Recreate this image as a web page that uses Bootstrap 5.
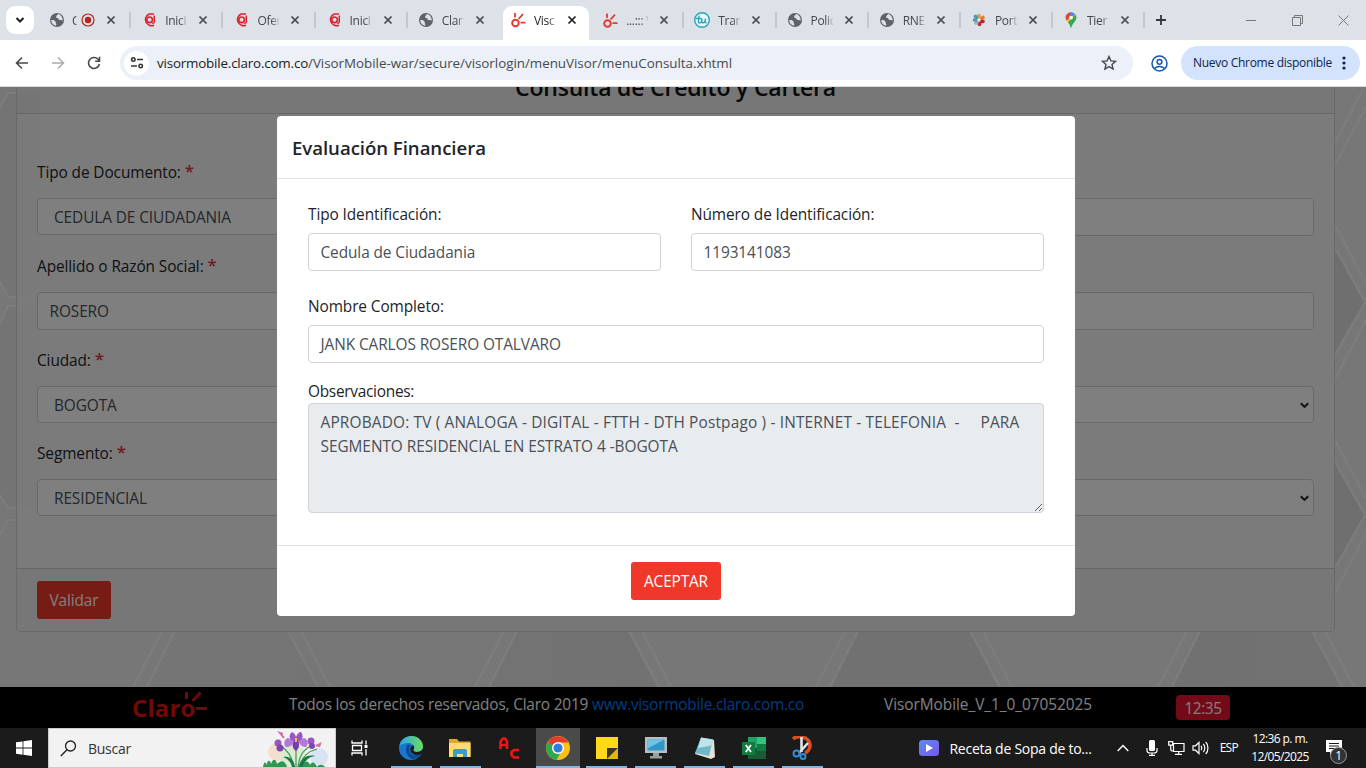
<!DOCTYPE html>
<html lang="es">
<head>
<meta charset="utf-8">
<meta name="viewport" content="width=device-width, initial-scale=1">
<title>Visor Mobile</title>
<link rel="stylesheet" href="https://cdn.jsdelivr.net/npm/bootstrap@5.3.0/dist/css/bootstrap.min.css">
<style>
body{font-family:"Open Sans","Noto Sans",sans-serif;font-size:15.4px;line-height:24px;letter-spacing:-.09px;height:768px;overflow:hidden;color:#212529}
svg{display:block;flex:none}
.caps{letter-spacing:.06px}
.caps-doc{letter-spacing:.18px}
.caps-wide{letter-spacing:.17px}
.tight{letter-spacing:-.27px}
.tighter{letter-spacing:-.5px}
/* browser chrome */
.tabstrip{height:40px;background:#dde1e8;font-size:12px;letter-spacing:-.3px;color:#45484d}
.tab-search{width:28px;height:28px;margin:6px 5px 0 6px;background:#fff;border-radius:9px}
.btab{width:92.2px;height:40px;padding-left:10px;position:relative}
.btab .ttl{width:22px;margin-left:8px;padding-top:1px;overflow:hidden;white-space:nowrap;-webkit-mask:linear-gradient(90deg,#000 65%,rgba(0,0,0,.15));mask:linear-gradient(90deg,#000 65%,rgba(0,0,0,.15))}
.btab .ttl.stub{width:5px;margin-left:7px}
.btab .cls{margin-left:11px}
.btab.sep::after{content:"";position:absolute;right:0;top:12px;width:2px;height:16px;background:#c3c7ce}
.btab.on::before{content:"";position:absolute;left:3px;right:3px;top:6px;bottom:0;background:#fff;border-radius:9px 9px 0 0}
.btab.on>*{position:relative;z-index:1;color:#1f1f1f}
.newtab{margin:14px 0 0 10px}
.win-controls{gap:35px;padding-right:17px}
.toolbar{height:47px;background:#fff;border-bottom:1px solid #d9dbde;padding-left:15px}
.toolbar-nav{gap:22px}
.omni{height:34px;width:1013px;border-radius:17px;background:#ebf0f9;padding:0 16px 0 4px;margin:0 18px 0 19px}
.site-chip{width:25px;height:25px;background:#fff}
.url{font-size:13.4px;margin-left:8px;letter-spacing:-.03px;color:#474b50}
.url b{font-weight:400;color:#1f2023;letter-spacing:-.19px}
.update-pill{width:179px;height:34px;border-radius:17px;background:#d3e3fd;font-size:12px;letter-spacing:-.29px;color:#0b2350;padding:0 14px 0 12px;margin-left:13px}
/* page */
.consult{margin:-28px 31px 0 16px;width:1319px;height:573px;background:rgba(255,255,255,.5);border:1px solid #d2d2d2;border-radius:4px}
.consult .card-header{height:54px;background:rgba(0,0,0,.035);border-bottom:1px solid #cfcfcf;font-size:23px;letter-spacing:-.2px;font-weight:600;line-height:30px;padding:12px 12px 0;color:#111}
.consult .card-body{padding:47px 20px 0}
.consult .card-footer{height:63px;padding:12px 20px;background:rgba(0,0,0,.035);border-top:1px solid #cfcfcf}
.req{color:#dc3545;font-weight:600;font-size:17px;line-height:1;vertical-align:1px}
.form-control{font-size:15.4px;line-height:24px;letter-spacing:-.09px;color:#495057;border:1px solid #ced4da;border-radius:4px;padding:7px 12px 3px 11.5px;height:38px}
.consult label{display:block;height:24px;margin-bottom:13px}
.consult .grp{margin-bottom:19px}
.consult .form-control.pick{height:37px;padding:7px 4px 3px 16px}
.btn-claro{background:#ef3829;color:#fff;border:0;border-radius:3px;height:38px;padding:2px 13px 0;font-size:15.4px;letter-spacing:-.14px}
.btn-claro.small-pad{padding:2px 12.500px 0}
.page-foot{height:41px;background:#000;color:#fff;padding-top:6px}
.rights{letter-spacing:-.19px}
.page-foot a{color:#007bff;text-decoration:none;letter-spacing:-.24px}
.brand{width:157px;margin-left:132px;padding-top:3px}
.logo-word{font-size:24px;font-weight:700;color:#e0140c;letter-spacing:.1px}
.brand svg{margin:-6px 0 0 -13px}
.version{margin-right:84px;letter-spacing:-.04px}
.clock-badge{background:#e8152f;width:54px;height:25px;border-radius:4px;margin:2px 136px 0 0;padding-top:2px;letter-spacing:-.45px}
.shade{background:rgba(0,0,0,.5)}
.eval{width:798px;height:500px;left:277px;top:29px;border-radius:4px}
.eval .modal-header{height:63px;padding:1px 15px 0;border-bottom:1px solid #dee2e6;font-size:18.6px;font-weight:600;letter-spacing:-.04px}
.eval .modal-body{padding:24px 31px 0}
.eval .modal-footer{height:71px;border-top:1px solid #dee2e6}
.eval .row{--bs-gutter-x:30px}
.eval label{display:block;margin-bottom:6px}
.eval .gap-row{margin-bottom:24px}
.eval label.notes{margin:17px 0 -1px}
.eval .readonly-box{height:110px;background:#e9ecef;white-space:pre;resize:vertical;overflow:hidden;letter-spacing:-.04px}
/* taskbar */
.taskbar{height:40px;background:#1b1b1b;color:#fff;font-size:14px;letter-spacing:-.26px}
.search-box{width:288px;height:40px;background:#f2f2f2;color:#333;border:1px solid #ccc;padding-left:11px}
.search-box .hint{margin-left:11px;padding-top:1px}
.slot{width:48.9px;height:40px;display:flex;align-items:center;justify-content:center;position:relative}
.slot.run::after{content:"";position:absolute;left:4px;right:4px;bottom:0;height:2px;background:#76b9ed}
.slot.cur{background:#4a4a4a;width:44.9px;margin:0 2px}
.slot.cur::after{left:0;right:0}
.start-btn{width:48px}
.apps{margin-left:2px}
.tray{margin-left:auto;padding-right:4px}
.news{margin:0 25px 0 10px;padding-top:1px;white-space:nowrap}
.t-mic{margin-left:17px}
.t-net{margin-left:10px}
.t-vol{margin-left:7px}
.esp{font-size:12px;letter-spacing:-.7px;margin:0 7px 0 11px}
.when{font-size:12px;line-height:18px;letter-spacing:-.6px;width:70px;text-align:center}
.note{margin:0 20px 0 11px}
.note-badge{position:absolute;left:4px;top:7px;width:17px;height:17px;border:1px solid #999;border-radius:50%;background:#333;font-size:12px;line-height:15px;text-align:center}
</style>
</head>
<body class="d-flex flex-column">
<svg width="0" height="0" class="position-absolute">
<defs>
<symbol id="globe" viewBox="0 0 16 16"><circle cx="8" cy="8" r="7" fill="#5f6368"/><path d="M2.200 8.200c2-.4 3.400.2 4.200 1.300.6.9 0 1.500.7 2.200.4.500.2 1.200-.1 2.100-2.700-.6-4.700-2.800-4.800-5.600zM9 2c-.2 1.200-1.200 1.100-1.700 1.900-.4.800.3 1.200-.4 1.900 1.300.1 2.200.3 2.600 1.300.3.900 1.300 1.200 2.300 1 .9-.1 1.300.6 1.900.3C13.900 5.300 11.800 2.700 9 2z" fill="#dde1e8"/></symbol>
<symbol id="cx" viewBox="0 0 10 10"><path d="M1.500 1.500l7 7M8.500 1.500l-7 7" stroke="currentColor" stroke-width="1.700" fill="none"/></symbol>
<symbol id="cc" viewBox="0 0 14 14"><path d="M12 12.200A6 6 0 1 1 7.200 1H12M12.300 2.500V8.500c0 1.500-1 2-2 1.500" fill="none" stroke="#d8232f" stroke-width="1.500"/><circle cx="7.600" cy="6.800" r="2.800" fill="none" stroke="#d8232f" stroke-width="1.600"/></symbol>
<symbol id="spark" viewBox="0 0 16 16"><circle cx="5.500" cy="11" r="3.300" fill="none" stroke="#e03c31" stroke-width="2"/><path d="M5 1v4.500M8.500 7l4.500-4.800M10.500 10.600H15.500" stroke="#e03c31" stroke-width="1.800"/></symbol>
<symbol id="chev" viewBox="0 0 9 7"><path d="M.8 1.200l3.700 3.700L8.200 1.200" fill="none" stroke="#222" stroke-width="2"/></symbol>
</defs>
</svg>

<header class="tabstrip d-flex">
<div class="tab-search d-flex align-items-center justify-content-center"><svg width="10" height="8"><path d="M1.500 2l3.500 3.500L8.500 2" fill="none" stroke="#1f1f1f" stroke-width="2"/></svg></div>
<div class="btab sep d-flex align-items-center"><svg width="16" height="16"><use href="#globe"/></svg><span class="ttl stub">C</span><svg class="ms-1" width="14" height="14"><circle cx="7" cy="7" r="6" fill="none" stroke="#b3261e" stroke-width="1.200"/><circle cx="7" cy="7" r="3.200" fill="#b3261e"/></svg><svg class="cls" width="10" height="10"><use href="#cx"/></svg></div>
<div class="btab sep d-flex align-items-center"><svg width="16" height="14"><use href="#cc"/></svg><span class="ttl">Inici</span><svg class="cls" width="10" height="10"><use href="#cx"/></svg></div>
<div class="btab sep d-flex align-items-center"><svg width="16" height="14"><use href="#cc"/></svg><span class="ttl">Ofer</span><svg class="cls" width="10" height="10"><use href="#cx"/></svg></div>
<div class="btab sep d-flex align-items-center"><svg width="16" height="14"><use href="#cc"/></svg><span class="ttl">Inici</span><svg class="cls" width="10" height="10"><use href="#cx"/></svg></div>
<div class="btab d-flex align-items-center"><svg width="16" height="16"><use href="#globe"/></svg><span class="ttl">Clar</span><svg class="cls" width="10" height="10"><use href="#cx"/></svg></div>
<div class="btab on d-flex align-items-center"><svg width="16" height="16"><use href="#spark"/></svg><span class="ttl">Visc</span><svg class="cls" width="10" height="10"><use href="#cx"/></svg></div>
<div class="btab sep d-flex align-items-center"><svg width="16" height="17"><use href="#spark"/></svg><span class="ttl">...::: V</span><svg class="cls" width="10" height="10"><use href="#cx"/></svg></div>
<div class="btab sep d-flex align-items-center"><svg width="16" height="16"><circle cx="8" cy="8" r="7.300" fill="#e9f6f9" stroke="#28a5bd" stroke-width="1.400"/><path d="M2 6.500h5.500M5.200 3.500c-.5 3-1.500 7.500.3 7.500 1.500 0 2.500-3 2.700-4.300-.6 2.500-.6 4.300.7 4.300 1.500 0 2.300-2.500 2.600-4.300-.5 2.500-.7 4.500 1.300 4" fill="none" stroke="#28a5bd" stroke-width="1.300"/></svg><span class="ttl">Tran</span><svg class="cls" width="10" height="10"><use href="#cx"/></svg></div>
<div class="btab sep d-flex align-items-center"><svg width="16" height="16"><use href="#globe"/></svg><span class="ttl">Polic</span><svg class="cls" width="10" height="10"><use href="#cx"/></svg></div>
<div class="btab sep d-flex align-items-center"><svg width="16" height="16"><use href="#globe"/></svg><span class="ttl">RNE</span><svg class="cls" width="10" height="10"><use href="#cx"/></svg></div>
<div class="btab sep d-flex align-items-center"><svg width="16" height="16"><g stroke-width="3.600" stroke-linecap="round"><path d="M8 7V3.500" stroke="#e9a13a"/><path d="M10 7l2-1.500" stroke="#e8793a"/><path d="M10 9.500h2" stroke="#b22a2a"/><path d="M8.500 10.500v2" stroke="#c22b2b"/><path d="M6 10l-1 1" stroke="#9bb0c2"/><path d="M5.500 8H3.500" stroke="#5c93ad"/><path d="M5.500 5.500l-1-1" stroke="#3b9db8"/></g><circle cx="8" cy="8" r="1.700" fill="#f3ede8"/></svg><span class="ttl">Port</span><svg class="cls" width="10" height="10"><use href="#cx"/></svg></div>
<div class="btab sep d-flex align-items-center"><svg width="16" height="16"><path d="M8 .3a5.500 5.500 0 0 0-4.300 2L8 6z" fill="#ea4335"/><path d="M8 .3a5.500 5.500 0 0 1 4.300 2L6 9 3.500 7.500z" fill="#4285f4"/><path d="M3.700 2.300C2 4.300 2.300 6.700 3.500 8.500L8 4z" fill="#ea4335"/><path d="M3.500 8.500L6 10.500 13 4l-.8-1.800z" fill="#fbbc04"/><path d="M12.500 2.500C14.200 5 13.300 7.600 11.800 9.500 10 11.800 9 13 8.500 15.300c-.2.700-.8.700-1 0-.5-2-1.200-3.500-2.500-5z" fill="#34a853"/><circle cx="8" cy="5.600" r="1.900" fill="#fff"/></svg><span class="ttl">Tier</span><svg class="cls" width="10" height="10"><use href="#cx"/></svg></div>
<svg class="newtab" width="12" height="12"><path d="M6 1v10M1 6h10" stroke="#33363a" stroke-width="1.800"/></svg>
<div class="win-controls ms-auto d-flex align-items-center">
<svg width="11" height="11"><path d="M0 5.500h10" stroke="#777"/></svg>
<svg width="11" height="11"><path d="M.5 2.500h8v8h-8zM2.500 2.500v-2h8v8h-2" fill="none" stroke="#777"/></svg>
<svg width="11" height="11"><path d="M.5.5l10 10M10.500.5l-10 10" stroke="#777"/></svg>
</div>
</header>

<div class="toolbar d-flex align-items-center">
<div class="toolbar-nav d-flex">
<svg width="14" height="14"><path d="M13 7H2M7 1.500L1.500 7 7 12.500" fill="none" stroke="#45484d" stroke-width="1.600"/></svg>
<svg width="14" height="14"><path d="M1 7h11M7 1.500L12.500 7 7 12.500" fill="none" stroke="#a9abaf" stroke-width="1.500"/></svg>
<svg width="14" height="14"><path d="M12.400 8A5.500 5.500 0 1 1 11 3.200l1.300 1.300M12.500.8v4.400H8.200" fill="none" stroke="#45484d" stroke-width="1.600"/></svg>
</div>
<div class="omni d-flex align-items-center">
<div class="site-chip rounded-circle d-flex align-items-center justify-content-center"><svg width="14" height="14"><g fill="none" stroke="#33363a" stroke-width="1.600"><circle cx="3.300" cy="3.500" r="1.700"/><path d="M7 3.500h6M1 10h6"/><circle cx="10.700" cy="10" r="1.700"/></g></svg></div>
<span class="url"><b>visormobile.claro.com.co</b><span>/VisorMobile-war/secure/visorlogin/menuVisor/menuConsulta.xhtml</span></span>
<svg class="ms-auto" width="16" height="16"><path d="M8 1.500l1.900 4.400 4.700.4-3.600 3.100 1.100 4.600L8 11.600 3.900 14 5 9.400 1.400 6.300l4.700-.4z" fill="none" stroke="#45484d" stroke-width="1.400"/></svg>
</div>
<svg width="17" height="17"><g fill="none" stroke="#1a56b0" stroke-width="1.500"><circle cx="8.500" cy="8.500" r="7.500"/><circle cx="8.500" cy="6.800" r="2.400"/><path d="M3.500 13.500c2.500-2.700 7.500-2.700 10 0"/></g></svg>
<div class="update-pill d-flex align-items-center justify-content-between"><span>Nuevo Chrome disponible</span><svg width="4" height="16" fill="#0b2350"><circle cx="2" cy="3" r="1.600"/><circle cx="2" cy="8" r="1.600"/><circle cx="2" cy="13" r="1.600"/></svg></div>
</div>

<main class="flex-grow-1 position-relative overflow-hidden d-flex flex-column">
<svg class="position-absolute top-0 start-0" width="1366" height="641" viewBox="0 87 1366 641">
<defs><linearGradient id="dk" x2="1"><stop offset="0" stop-color="#ebebeb"/><stop offset=".6" stop-color="#e2e2e2"/><stop offset="1" stop-color="#e4e4e4"/></linearGradient></defs>
<rect y="87" width="1366" height="641" fill="#eee"/>
<path d="M175 631L147 687H318L288 631zM516 631L489 687H657L628 631zM857 631L830 687H998L970 631zM1200 631L1172 687H1341L1313 631z" fill="url(#dk)"/>
<path d="M0 108L8 93H40V297H8L0 282zM0 323L8 306H40V508H8L0 495z" fill="#e9e9e9"/>
<path d="M1335 248L1365 302 1335 355zM1335 462L1365 515 1335 568z" fill="#dedede"/>
<g fill="none" stroke="#fbfbfb" stroke-width="2"><path d="M162 631l-29 56M175 631l-28 56M288 631l30 56M301 631l29 56M504 631l-29 56M517 631l-28 56M629 631l30 56M642 631l29 56M845 631l-29 56M858 631l-28 56M970 631l30 56M983 631l29 56M1187 631l-29 56M1200 631l-28 56M1312 631l30 56M1325 631l29 56"/>
<path d="M0 108L8 93H16M0 282L8 297H16M0 323L8 306H16M0 495L8 508H16M0 535L8 520H16M1335 143l29-56M1335 165l31-58M1335 225l31 58M1335 248l30 54-30 53M1366 320l-31 59M1335 440l31 58M1335 462l30 53-30 53M1366 533l-31 60"/></g>
</svg>
<section class="card consult position-relative">
<div class="card-header text-center">Consulta de Crédito y Cartera</div>
<div class="card-body">
<div class="row"><div class="col-6 grp"><label>Tipo de Documento: <span class="req">*</span></label><div class="form-control pick caps-doc">CEDULA DE CIUDADANIA</div></div><div class="col-6 grp"><label>&nbsp;</label><div class="form-control"></div></div></div>
<div class="row"><div class="col-6 grp"><label>Apellido o Razón Social: <span class="req">*</span></label><div class="form-control caps">ROSERO</div></div><div class="col-6 grp"><label>&nbsp;</label><div class="form-control"></div></div></div>
<div class="row"><div class="col-6 grp"><label>Ciudad: <span class="req">*</span></label><div class="form-control pick tighter">BOGOTA</div></div><div class="col-6 grp"><label>&nbsp;</label><div class="form-control pick d-flex align-items-center justify-content-end pt-1"><svg width="9" height="7"><use href="#chev"/></svg></div></div></div>
<div class="row"><div class="col-6 grp"><label>Segmento: <span class="req">*</span></label><div class="form-control pick caps">RESIDENCIAL</div></div><div class="col-6 grp"><label>&nbsp;</label><div class="form-control pick d-flex align-items-center justify-content-end pt-1"><svg width="9" height="7"><use href="#chev"/></svg></div></div></div>
</div>
<div class="card-footer"><button class="btn btn-claro small-pad">Validar</button></div>
</section>
<footer class="page-foot mt-auto position-relative d-flex">
<div class="brand d-flex"><span class="logo-word">Claro</span><svg width="28" height="26"><path d="M4.500 2v7M10.500 11l8-8.500M14 18.500h11" stroke="#e0140c" stroke-width="3"/></svg></div>
<div><span class="rights">Todos los derechos reservados, Claro 2019</span> <a href="#">www.visormobile.claro.com.co</a></div>
<div class="version ms-auto">VisorMobile_V_1_0_07052025</div>
<div class="clock-badge d-flex align-items-center justify-content-center">12:35</div>
</footer>
<div class="shade position-absolute top-0 start-0 w-100 h-100"></div>
<div class="eval modal-content position-absolute border-0 bg-white">
<div class="modal-header">Evaluación Financiera</div>
<div class="modal-body">
<div class="row gap-row"><div class="col-6"><label>Tipo Identificación:</label><div class="form-control">Cedula de Ciudadania</div></div>
<div class="col-6"><label>Número de Identificación:</label><div class="form-control">1193141083</div></div></div>
<label>Nombre Completo:</label><div class="form-control caps-wide">JANK CARLOS ROSERO OTALVARO</div>
<label class="notes tight">Observaciones:</label>
<div class="form-control readonly-box"><span class="caps-wide">APROBADO: TV ( ANALOGA - DIGITAL - FTTH - DTH Postpago ) - INTERNET - TELEFONIA  -     PARA</span>
SEGMENTO RESIDENCIAL EN ESTRATO 4 -BOGOTA</div>
</div>
<div class="modal-footer justify-content-center p-0"><button class="btn btn-claro">ACEPTAR</button></div>
</div>
</main>

<footer class="taskbar d-flex align-items-center">
<div class="start-btn d-flex justify-content-center"><svg width="16" height="16" fill="#fff"><path d="M0 2.300L6.600 1.400V7.600H0zM7.400 1.300L16 0V7.600H7.400zM0 8.400H6.600V14.700L0 13.800zM7.400 8.400H16V16L7.400 14.800z"/></svg></div>
<div class="search-box d-flex align-items-center">
<svg width="17" height="17"><circle cx="10.500" cy="6" r="5" fill="none" stroke="#222" stroke-width="1.300"/><path d="M7 9.700L.8 16" stroke="#222" stroke-width="1.400"/></svg>
<span class="hint">Buscar</span>
<svg class="ms-auto me-1" width="68" height="38" viewBox="0 0 68 38"><circle cx="14" cy="23" r="9" fill="#f3dfd0"/><circle cx="56" cy="28" r="9" fill="#d8e4f3"/><circle cx="30" cy="28" r="13" fill="#dcead0"/>
<path d="M0 38c1-5 2-6 4-2 0-5 3-6 4-1 2-6 5-5 6 0 5-5 8-3 10 3zM40 38c1-6 5-8 7-2 2-4 5-3 7 2 2-3 6-3 8 0z" fill="#2c9a4c"/>
<g fill="none" stroke="#3f9a56" stroke-width="1.200"><path d="M33 38V18M31 38c-3-12-6-16-13-21M35 38c1-11 5-17 14-22M36 38c3-10 10-16 18-18"/></g><path d="M32 38c-1-8-6-11-12-10 5 2 8 5 9 10zM36 38c1-8 8-13 16-11-7 1-10 5-12 11z" fill="#187a46"/>
<g fill="#9a55c4"><path d="M33 14c-7-1-8-8-4-11 2 1 3 2 4 5 1-3 3-5 5-5 3 4 2 10-5 11z"/><path d="M25 9c-4 1-5 7-2 9 4 0 7-2 8-6zM41 9c4 1 5 7 2 9-4 0-6-2-8-6z" fill="#b07ad6"/><path d="M33 10c3 2 5 8 0 12-5-3-4-9 0-12z" fill="#7a3aa8"/><circle cx="15" cy="14" r="3.500"/><circle cx="17" cy="19" r="3.500" fill="#7c45b0"/><circle cx="48" cy="12" r="3.500"/><circle cx="49" cy="17" r="3" fill="#7c45b0"/></g><path d="M33 9v4" stroke="#f0c53c" stroke-width="2"/><path d="M21 9l-4-5 3 1M53 17l4-2-1 3" stroke="#d06fa8" stroke-width="2" fill="none"/></svg>
</div>
<div class="slot"><svg width="18" height="16"><path d="M1 .5v2.500h10V.5M1 15.500V13h10v2.500M1.500 5.500h9v5h-9zM15 .5v4M15 9v6.500" fill="none" stroke="#fff" stroke-width="1.300"/><path d="M13.500 5h3v3h-3z" fill="#fff"/></svg></div>
<div class="apps d-flex">
<div class="slot run"><svg width="24" height="24"><defs><linearGradient id="e1" x2="1"><stop stop-color="#2aa8e8"/><stop offset="1" stop-color="#6fdc5a"/></linearGradient></defs><circle cx="12" cy="12" r="12" fill="#1878cf"/><path d="M.5 9.500C2 3.500 7 0 12.500 0 19 0 24 5 24 10.500c0 3.500-3 5.500-6 5.500-2 0-3.800-.5-3.800-1.500 0-.8 1-1.200 1-3C15.200 9 12.500 7 9 7 5 7 1.800 8.500.5 9.500z" fill="url(#e1)"/><path d="M9 8.200C6 10.500 5.500 18 12 22.500c3.500 1.300 8-.5 10-4.500-6 3-12 .5-11.800-5C10.300 11 11 10 12 9.500z" fill="#0c4a94"/><path d="M14.500 9.500c1.500 2 0 3.500-.2 5 .5 1.500 5 2.500 8.700-.5 1-1 1-2 1 1-1 3-2.500 4-5 4-5 .5-8-3-7.800-6 .3-2 1.500-3.500 3.300-3.500z" fill="#1b1b1b"/></svg></div>
<div class="slot run"><svg width="22" height="20"><path d="M0 1h8l2 2.500h11.500V19H0z" fill="#e0a72e"/><path d="M0 5h21.500v14H0z" fill="#fbdc76"/><path d="M4 19v-6c0-1.500 1-2 2-2h10c1 0 2 .5 2 2v6h-4v-3H8v3z" fill="#3c9bd0"/></svg></div>
<div class="slot"><svg width="20" height="22"><path d="M1.500 12V4.500L4 1.500H6L8 4.500V12M2 8h6" fill="none" stroke="#f01414" stroke-width="2.600"/><path d="M20 13H15l-2.500 2v3l2.500 2.500h5" fill="none" stroke="#f01414" stroke-width="2.600"/></svg></div>
<div class="slot run cur"><svg width="24" height="24"><circle cx="12" cy="12" r="12" fill="#fbc116"/><path d="M12 12L1.600 6A12 12 0 0 0 10.500 23.900L16 14z" fill="#2da94f"/><path d="M12 12L1.600 6A12 12 0 0 1 22.400 6.500H12z" fill="#e33b2e"/><circle cx="12" cy="12" r="6" fill="#fff"/><circle cx="12" cy="12" r="4.600" fill="#2f7de1"/></svg></div>
<div class="slot run"><svg width="22" height="22"><path d="M0 0h22v11L11 22H0z" fill="#ffd91a"/><path d="M11 11h11L11 22z" fill="#3a3626"/><path d="M22 11v11H11z" fill="#e5b409"/></svg></div>
<div class="slot run"><svg width="24" height="24"><path d="M1 1h22v16H1z" fill="#b8bec2"/><path d="M3.500 3.500h17v11h-17z" fill="#2f97c8"/><path d="M3.500 3.500h17l-17 9z" fill="#6fc2e4"/><path d="M9 17h6v3h3v2.500H6V20h3z" fill="#989da0"/></svg></div>
<div class="slot run"><svg width="24" height="24"><path d="M9 2l12 2 1 17-4 2-16-5z" fill="#e5e2d6"/><path d="M8 1.500l12 2-4 16.500-14-3z" fill="#6fb8ca"/><path d="M8 1.500l12 2-1.500 6L5 12z" fill="#bfe3ea"/></svg></div>
<div class="slot run"><svg width="24" height="22"><path d="M6 0h18v22H6z" fill="#21a366"/><path d="M15 0h9v7h-9z" fill="#33c481"/><path d="M6 11h18v11H6z" fill="#185c37"/><path d="M15 7h9v7h-9z" fill="#107c41"/><path d="M0 5h13v13H0z" fill="#107c41"/><path d="M3.800 8l5.200 7M9 8l-5.200 7" stroke="#fff" stroke-width="1.800"/></svg></div>
<div class="slot run"><svg width="20" height="24"><path d="M1 3C5-1 17 0 18 9c.3 4-3 7-5 8" fill="none" stroke="#d9501e" stroke-width="3.600"/><path d="M9.500 1v15M16 7L7 17" stroke="#dfe5ea" stroke-width="2.600"/><circle cx="4.500" cy="17.500" r="3" fill="none" stroke="#2f8fd8" stroke-width="2"/><circle cx="11" cy="20.500" r="2.500" fill="none" stroke="#2f8fd8" stroke-width="2"/></svg></div>
</div>
<div class="tray d-flex align-items-center">
<svg width="20" height="16"><defs><linearGradient id="v1" y2="1"><stop stop-color="#5a8cf5"/><stop offset="1" stop-color="#7a55e8"/></linearGradient></defs><rect width="20" height="16" rx="3.500" fill="url(#v1)"/><path d="M7 4l7 4-7 4z" fill="#fff"/></svg>
<span class="news">Receta de Sopa de to...</span>
<svg width="12" height="8"><path d="M.7 7L6 1.500 11.300 7" fill="none" stroke="#fff" stroke-width="1.400"/></svg>
<svg class="t-mic" width="12" height="16"><rect x="3" width="6" height="11" rx="1.500" fill="#fff"/><path d="M1 8v2.500C1 12 2 13 4 13h4c2 0 3-1 3-2.500V8M6 13v2.500M3 15.300h6" fill="none" stroke="#fff" stroke-width="1.200"/></svg>
<svg class="t-net" width="17" height="14"><path d="M5.500 2.500H16v8H5.500zM10.700 10.500V13M7 13.300h7M.7.700h4v3.500h-4zM2.700 4v4c0 1.500.5 2 2 2" fill="none" stroke="#fff" stroke-width="1.200"/></svg>
<svg class="t-vol" width="17" height="14"><path d="M1 4.800h2.500L7 1.500v11L3.500 9.200H1zM9 5c1 1 1 3 0 4M11.300 3c2 2 2 6 0 8M13.700 1c3 3 3 9 0 12" fill="none" stroke="#fff" stroke-width="1.200"/></svg>
<span class="esp">ESP</span>
<div class="when">12:36 p. m.<br>12/05/2025</div>
<div class="note position-relative"><svg width="16" height="16"><path d="M0 0h16v12H7l-3 3.500V12H0z" fill="#fff"/><path d="M3 3.500h10M3 6h10M3 8.500h6" stroke="#1b1b1b"/></svg><span class="note-badge">1</span></div>
</div>
</footer>
<script src="https://cdn.jsdelivr.net/npm/bootstrap@5.3.0/dist/js/bootstrap.bundle.min.js"></script>
</body>
</html>
